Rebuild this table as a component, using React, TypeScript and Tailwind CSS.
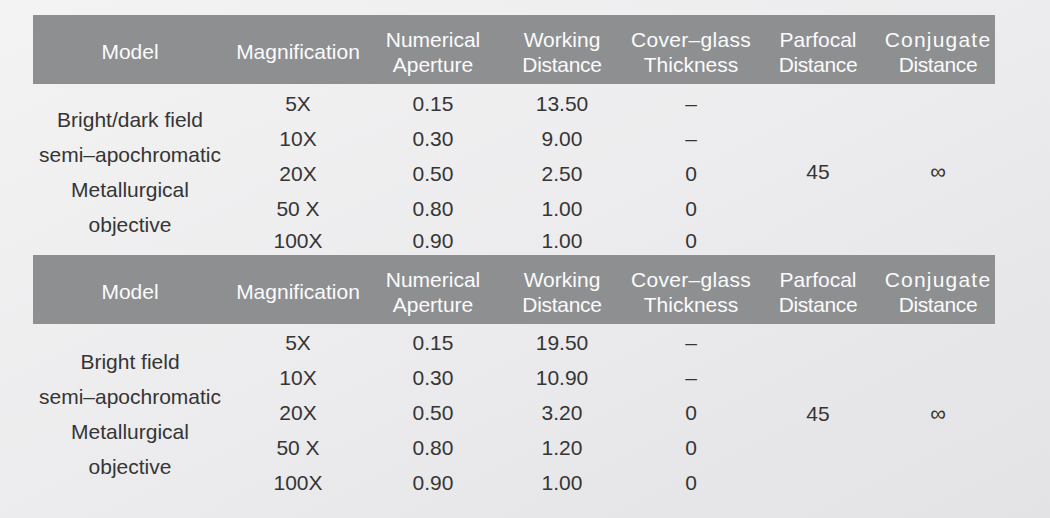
import React from "react";

const cols = "grid grid-cols-[194px_142px_128px_130px_128px_126px_114px]";

type Block = {
  model: string[];
  rows: [string, string, string, string][];
  pt: string;
  rowsCls: string;
};

const blocks: Block[] = [
  {
    model: ["Bright/dark field", "semi–apochromatic", "Metallurgical", "objective"],
    rows: [
      ["5X", "0.15", "13.50", "–"],
      ["10X", "0.30", "9.00", "–"],
      ["20X", "0.50", "2.50", "0"],
      ["50 X", "0.80", "1.00", "0"],
      ["100X", "0.90", "1.00", "0"],
    ],
    pt: "pt-[2px] h-[171px]",
    rowsCls: "grid-rows-[35px_35px_35px_35px_29px]",
  },
  {
    model: ["Bright field", "semi–apochromatic", "Metallurgical", "objective"],
    rows: [
      ["5X", "0.15", "19.50", "–"],
      ["10X", "0.30", "10.90", "–"],
      ["20X", "0.50", "3.20", "0"],
      ["50 X", "0.80", "1.20", "0"],
      ["100X", "0.90", "1.00", "0"],
    ],
    pt: "pt-[1px] h-[176px]",
    rowsCls: "grid-rows-[35px_35px_35px_35px_35px]",
  },
];

function Header() {
  return (
    <div className={`${cols} h-[69px] bg-[#8e8f91] text-[#fbfbfb] text-[21px] leading-[25px]`}>
      <div className="flex items-center justify-center pt-[4px]">Model</div>
      <div className="flex items-center justify-center pt-[4px]">Magnification</div>
      <div className="flex flex-col items-center justify-center pt-[5px]">
        <span>Numerical</span>
        <span>Aperture</span>
      </div>
      <div className="flex flex-col items-center justify-center pt-[5px]">
        <span>Working</span>
        <span className="tracking-[-0.3px]">Distance</span>
      </div>
      <div className="flex flex-col items-center justify-center pt-[5px]">
        <span className="tracking-[0.3px]">Cover–glass</span>
        <span>Thickness</span>
      </div>
      <div className="flex flex-col items-center justify-center pt-[5px]">
        <span>Parfocal</span>
        <span className="tracking-[-0.4px]">Distance</span>
      </div>
      <div className="flex flex-col items-center justify-center pt-[5px]">
        <span className="tracking-[1.2px]">Conjugate</span>
        <span className="tracking-[-0.4px]">Distance</span>
      </div>
    </div>
  );
}

function Body({ b }: { b: Block }) {
  return (
    <div className={b.pt}>
      <div className={`${cols} ${b.rowsCls} text-[21px] text-[#353535]`}>
        <div className="row-span-5 col-start-1 row-start-1 flex flex-col items-center justify-center leading-[35px] pt-[3px]">
          {b.model.map((m) => (
            <span key={m}>{m}</span>
          ))}
        </div>
        {b.rows.map((r, i) => (
          <React.Fragment key={i}>
            {r.map((c, j) => (
              <div
                key={j}
                className="flex items-center justify-center"
                style={{ gridColumnStart: j + 2, gridRowStart: i + 1 }}
              >
                {c}
              </div>
            ))}
          </React.Fragment>
        ))}
        <div className="row-span-5 col-start-6 row-start-1 flex items-center justify-center pt-[2px]">45</div>
        <div className="row-span-5 col-start-7 row-start-1 flex items-center justify-center pt-[2px] text-[22px]">∞</div>
      </div>
    </div>
  );
}

export default function App() {
  return (
    <div
      className="w-[1050px] h-[518px] overflow-hidden bg-gradient-to-br from-[#f3f3f3] via-[#ececee] to-[#e3e3e6] pt-[15px] pl-[33px]"
      style={{ fontFamily: '"Liberation Sans", Arial, sans-serif' }}
    >
      <div className="w-[962px]">
        {blocks.map((b, i) => (
          <div key={i}>
            <Header />
            <Body b={b} />
          </div>
        ))}
      </div>
    </div>
  );
}
